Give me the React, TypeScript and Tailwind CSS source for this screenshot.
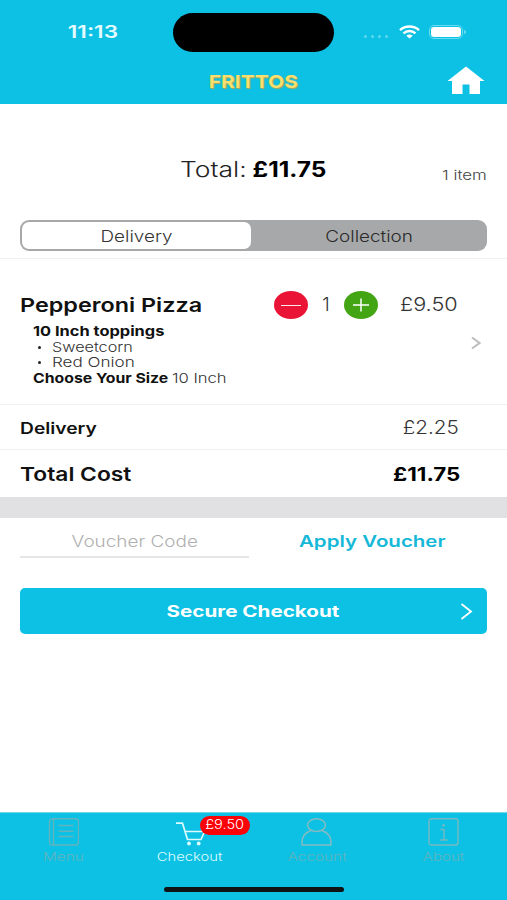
import type { ReactNode } from "react";
import { clsx } from "clsx";

// Horizontally stretched text run
function Wide({ className, children }: { className: string; children: ReactNode }) {
  return <span className={clsx("inline-block whitespace-nowrap", className)}>{children}</span>;
}

function StatusBar() {
  return (
    <div className="flex h-[63px] items-center">
      <div className="flex w-[173px] justify-center pl-[13px] pt-[2px]">
        <Wide className="scale-x-[1.33] text-[17px] font-semibold text-[#e4fbff]">11:13</Wide>
      </div>
      <div className="mt-px h-[39px] w-[161px] rounded-[20px] bg-black" />
      <div className="flex flex-1 items-center pl-[30px]">
        <div className="mt-[9px] flex gap-[4px]">
          <i className="size-[3px] rounded-full bg-[#5dd8ee]" />
          <i className="size-[3px] rounded-full bg-[#5dd8ee]" />
          <i className="size-[3px] rounded-full bg-[#5dd8ee]" />
          <i className="size-[3px] rounded-full bg-[#5dd8ee]" />
        </div>
        <svg className="ml-[11px]" width="21" height="14" viewBox="0 0 21 14" fill="none" stroke="white" strokeWidth="2.5">
          <path d="M1 5.1C6.2 .4 14.8 .4 20 5.1" />
          <path d="M4.5 8.4C8 5.3 13 5.3 16.5 8.4" />
          <path d="M7.3 10.8c1.9-1.7 4.5-1.7 6.4 0L10.5 13.6z" fill="white" stroke="none" />
        </svg>
        <div className="ml-[9px] h-[14px] w-[34px] rounded-[5px] border border-[#6bdcf0] p-[1px]">
          <div className="h-full rounded-[3px] bg-white" />
        </div>
        <i className="ml-[1px] h-[4px] w-[2px] rounded-r-full bg-[#6bdcf0]" />
      </div>
    </div>
  );
}

function TitleBar() {
  return (
    <div className="grid h-[41px] grid-cols-[60px_1fr_60px] items-center pb-[3px]">
      <span />
      <div className="pb-[2px] text-center">
        <Wide className="scale-x-[1.165] text-[18px] font-bold text-[#f8df70] [text-shadow:1px_1px_1px_#b5a653]">FRITTOS</Wide>
      </div>
      <svg className="-mt-[3px]" width="38" height="29" viewBox="0 0 38 29" fill="white">
        <path d="M19 .5 37.500 15H33v13H22.500V18.500H15.500V28H5V15H.5z" />
      </svg>
    </div>
  );
}

function Summary() {
  return (
    <div className="grid h-[116px] grid-cols-[1fr_auto_1fr] items-center px-5 pt-[15px] text-[21px]">
      <span />
      <div className="flex w-[147px] justify-between pr-px">
        <Wide className="origin-left scale-x-[1.26] font-light text-[#222]">Total:</Wide>
        <Wide className="origin-right scale-x-[1.165] font-bold text-black">£11.75</Wide>
      </div>
      <div className="pt-[6px] text-right leading-none">
        <Wide className="origin-right scale-x-[1.25] text-[13.5px] font-light text-[#444]">1 item</Wide>
      </div>
    </div>
  );
}

function Segments() {
  return (
    <div className="mx-5 grid h-[31px] grid-cols-[229px_1fr] rounded-[9px] bg-[#a6a8a9] p-[2px] text-base leading-none">
      <div className="flex items-center justify-center rounded-[7px] bg-white text-[#333]">
        <Wide className="scale-x-[1.18] font-light">Delivery</Wide>
      </div>
      <div className="flex items-center justify-center pl-[3px] text-[#2a2a2a]">
        <Wide className="scale-x-[1.18] font-light">Collection</Wide>
      </div>
    </div>
  );
}

function BasketItem() {
  return (
    <div className="mt-[7px] flex h-[147px] border-y border-[#f0f0f0] pr-5">
      <div className="flex-1 pl-5 pt-[33px]">
        <div className="flex h-[28px] items-center">
          <Wide className="origin-left scale-x-[1.23] text-[19px] font-semibold text-[#111]">Pepperoni Pizza</Wide>
        </div>
        <div className="pl-[13px] pt-[4px] text-[13.5px] leading-[15.5px]">
          <div>
            <Wide className="origin-left scale-x-[1.215] font-bold text-[#111]">10 Inch toppings</Wide>
          </div>
          <ul className="font-light text-[#333]">
            <li className="flex items-center gap-[11px] pl-[5px]">
              <i className="size-[3px] rounded-full bg-[#222]" />
              <Wide className="origin-left scale-x-[1.2]">Sweetcorn</Wide>
            </li>
            <li className="flex items-center gap-[11px] pl-[5px]">
              <i className="size-[3px] rounded-full bg-[#222]" />
              <Wide className="origin-left scale-x-[1.265]">Red Onion</Wide>
            </li>
          </ul>
          <div className="flex">
            <span className="w-[139px]">
              <Wide className="origin-left scale-x-[1.17] font-bold text-[#111]">Choose Your Size</Wide>
            </span>
            <Wide className="origin-left scale-x-[1.23] font-light text-[#333]">10 Inch</Wide>
          </div>
        </div>
      </div>
      <div className="w-[213px]">
        <div className="mt-8 flex h-[28px] items-center">
          <button className="grid h-7 w-[34px] place-items-center rounded-[50%] bg-[#ea1536]">
            <i className="h-px w-5 bg-white/90" />
          </button>
          <span className="w-[36px] text-center text-[19px] font-light text-[#333]">1</span>
          <button className="grid h-7 w-[34px] place-items-center rounded-[50%] bg-[#43a514]">
            <svg width="16" height="14" viewBox="0 0 16 14" stroke="white" strokeWidth="1.500">
              <path d="M0 7H16M8 .5V13.500" />
            </svg>
          </button>
          <Wide className="ml-[22px] mt-px origin-left scale-x-[1.14] text-[19px] font-light text-[#333]">£9.50</Wide>
        </div>
        <svg className="ml-[197px] mt-[17px]" width="10" height="14" viewBox="0 0 10 14" fill="none" stroke="#bdbdbd" strokeWidth="2">
          <path d="M1 1.500 8.500 7 1 12.500" />
        </svg>
      </div>
    </div>
  );
}

function Totals() {
  return (
    <>
      <div className="flex h-[45px] items-center justify-between border-b border-[#f0f0f0] pl-5 pr-[48px]">
        <Wide className="mt-[3px] origin-left scale-x-[1.24] text-[15.5px] font-semibold text-[#111]">Delivery</Wide>
        <Wide className="mt-px origin-right scale-x-[1.15] text-[18px] font-light text-[#333]">£2.25</Wide>
      </div>
      <div className="flex h-[47px] items-center justify-between pl-5 pr-[47px] pt-[3px] text-[19px]">
        <Wide className="origin-left scale-x-[1.2] font-semibold text-[#111]">Total Cost</Wide>
        <Wide className="origin-right scale-x-[1.175] font-bold text-black">£11.75</Wide>
      </div>
    </>
  );
}

function Voucher() {
  return (
    <>
      <div className="flex px-5 pt-[7px]">
        <div className="flex h-[33px] w-[229px] items-center justify-center border-b-2 border-[#e5e6e7] pt-[2px]">
          <Wide className="scale-x-[1.22] text-[15.5px] font-light text-[#b0b0b0]">Voucher Code</Wide>
        </div>
        <button className="ml-[10px] flex h-[33px] flex-1 items-center justify-center pb-[2px] pr-px">
          <Wide className="scale-x-[1.28] text-base font-semibold text-[#16b8d8]">Apply Voucher</Wide>
        </button>
      </div>
      <button className="mx-5 mt-[30px] grid h-[46px] grid-cols-[27px_1fr_27px] items-center rounded-[5px] bg-[#0cc1e3]">
        <span />
        <Wide className="mt-[2px] -translate-x-px scale-x-[1.33] justify-self-center text-[15.5px] font-bold text-white">Secure Checkout</Wide>
        <svg width="13" height="17" viewBox="0 0 13 17" fill="none" stroke="white" strokeWidth="1.800">
          <path d="M1.500 1 11 8.500 1.500 16" />
        </svg>
      </button>
    </>
  );
}

function Tab({ icon, label, active }: { icon: ReactNode; label: ReactNode; active?: boolean }) {
  return (
    <div
      className={clsx(
        "relative flex flex-col items-center pt-[4px] text-xs leading-none",
        active ? "text-[#dcfbff]" : "text-[#63b3be]",
      )}
    >
      <div className="flex h-[29px] items-center">{icon}</div>
      <div className="mt-[5px]">{label}</div>
    </div>
  );
}

function TabBar() {
  return (
    <nav className="flex h-[88px] flex-col border-t border-[#76d7e8] bg-[#0cc1e3]">
      <div className="grid flex-1 grid-cols-4">
        <Tab
          icon={
            <svg width="31" height="28" viewBox="0 0 31 28" fill="none" stroke="currentColor" strokeWidth="1.400">
              <rect x="1.500" y=".8" width="29" height="26.200" rx="3" />
              <path d="M5.500 1V27M10.500 7.500H25.500M10.500 13.200H25.500M10.500 18.500H25.500" />
            </svg>
          }
          label={<Wide className="translate-x-[0.5px] scale-x-[1.28] font-light">Menu</Wide>}
        />
        <Tab
          active
          icon={
            <svg className="mt-[5px]" width="29" height="24" viewBox="0 0 29 24" fill="none" stroke="currentColor" strokeWidth="1.700" strokeLinejoin="round">
              <path d="M0 1.200H6.500L11.500 17.500H25L28.500 9.500H9" />
              <circle cx="13" cy="21.500" r="1.900" fill="currentColor" stroke="none" />
              <circle cx="22.700" cy="21.500" r="1.900" fill="currentColor" stroke="none" />
            </svg>
          }
          label={
            <>
              <Wide className="scale-x-[1.23] font-light">Checkout</Wide>
              <span className="absolute left-[73px] top-[3px] grid h-[19px] w-[50px] place-items-center rounded-full bg-[#fb0207]">
                <Wide className="scale-x-[1.17] text-[12.5px] font-light text-white">£9.50</Wide>
              </span>
            </>
          }
        />
        <Tab
          icon={
            <svg width="31" height="28" viewBox="0 0 31 28" fill="none" stroke="currentColor" strokeWidth="1.500" className="text-[#84bbc2]">
              <ellipse cx="15.500" cy="7.100" rx="9" ry="6.300" />
              <path d="M10.500 12.300C4.500 14.500 1 18.500 1 24.500V27H30V24.500C30 18.500 26.500 14.500 20.500 12.300" />
            </svg>
          }
          label={<Wide className="scale-x-[1.28] font-light">Account</Wide>}
        />
        <Tab
          icon={
            <svg width="31" height="28" viewBox="0 0 31 28" fill="none" stroke="currentColor" strokeWidth="1.400" className="text-[#78b8c0]">
              <rect x="1" y=".8" width="29" height="26.200" rx="2.500" />
              <path d="M12.500 11.500H16V22M12 22H19.500" />
              <circle cx="15.500" cy="7.300" r="1.300" fill="currentColor" stroke="none" />
            </svg>
          }
          label={<Wide className="scale-x-[1.25] font-light">About</Wide>}
        />
      </div>
      <div className="mx-auto mb-[8px] h-[5px] w-[180px] rounded-full bg-[#101314]" />
    </nav>
  );
}

export default function App() {
  return (
    <div className="flex h-[900px] w-[507px] flex-col overflow-hidden bg-white font-['Inter','Liberation_Sans',sans-serif]">
      <header className="h-[104px] shrink-0 bg-[#0cc1e3]">
        <StatusBar />
        <TitleBar />
      </header>
      <main className="flex flex-1 flex-col">
        <Summary />
        <Segments />
        <BasketItem />
        <Totals />
        <div className="h-[21px] bg-[#e1e1e3]" />
        <Voucher />
      </main>
      <TabBar />
    </div>
  );
}
